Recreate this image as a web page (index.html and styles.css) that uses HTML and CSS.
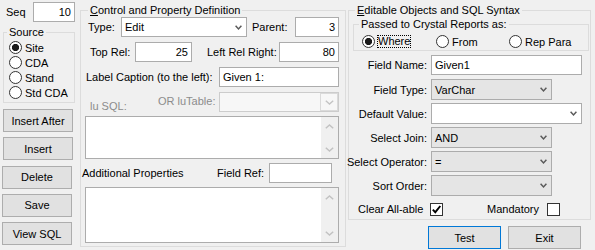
FILE: index.html
```html
<!DOCTYPE html>
<html>
<head>
<meta charset="utf-8">
<link rel="stylesheet" href="styles.css">
</head>
<body>
<div class="dialog">
  <div class="left">
    <div class="seq-row"><span class="seq-label">Seq</span><div class="tb num seq-input">10</div></div>
    <fieldset class="grp source">
      <legend>Source</legend>
      <div class="src-list">
        <div class="src-row"><span class="radio on"></span><span class="rtxt">Site</span></div>
        <div class="src-row"><span class="radio"></span><span class="rtxt">CDA</span></div>
        <div class="src-row"><span class="radio"></span><span class="rtxt">Stand</span></div>
        <div class="src-row"><span class="radio"></span><span class="rtxt">Std CDA</span></div>
      </div>
    </fieldset>
    <div class="btn-stack">
      <div class="btn">Insert After</div>
      <div class="btn">Insert</div>
      <div class="btn shift">Delete</div>
      <div class="btn shift">Save</div>
      <div class="btn shift">View SQL</div>
    </div>
  </div>

  <fieldset class="grp mid">
    <legend><span class="u">C</span>ontrol and Property Definition</legend>
    <div class="mrow r1">
      <span class="lbl l-type">Type:</span>
      <div class="combo white w126"><span class="ctxt">Edit</span><svg class="dd" width="7" height="5" viewBox="0 0 7 5"><path d="M0.6 0.8 L3.5 3.9 L6.4 0.8" fill="none" stroke="#5a5a5a" stroke-width="1.5"/></svg></div>
      <span class="lbl l-parent">Parent:</span>
      <div class="tb num w44">3</div>
    </div>
    <div class="mrow">
      <span class="lbl l-toprel">Top Rel:</span>
      <div class="tb num w57">25</div>
      <span class="lbl l-lrr">Left Rel Right:</span>
      <div class="tb num w60">80</div>
    </div>
    <div class="mrow">
      <span class="lbl l-cap">Label Caption (to the left):</span>
      <div class="tb w120">Given 1:</div>
    </div>
    <div class="mrow">
      <span class="lbl dis l-lusql">lu SQL:</span>
      <span class="lbl dis l-lut">OR luTable:</span>
      <div class="combo disabled w120"><span class="ctxt"></span><span class="ddbox"><svg width="9" height="5" viewBox="0 0 9 5"><path d="M0.8 0.8 L4.5 4 L8.2 0.8" fill="none" stroke="#c4c4c4" stroke-width="1.4"/></svg></span></div>
    </div>
    <div class="memo m1">
      <div class="area"></div>
      <div class="vs">
        <svg width="9" height="5" viewBox="0 0 9 5"><path d="M0.8 4.2 L4.5 1 L8.2 4.2" fill="none" stroke="#c2c2c2" stroke-width="1.5"/></svg>
        <svg width="9" height="5" viewBox="0 0 9 5"><path d="M0.8 0.8 L4.5 4 L8.2 0.8" fill="none" stroke="#c2c2c2" stroke-width="1.5"/></svg>
      </div>
    </div>
    <div class="mrow r6">
      <span class="lbl l-add">Additional Properties</span>
      <span class="lbl l-fref">Field Ref:</span>
      <div class="tb w63"></div>
    </div>
    <div class="memo m2">
      <div class="area"></div>
      <div class="vs">
        <svg width="9" height="5" viewBox="0 0 9 5"><path d="M0.8 4.2 L4.5 1 L8.2 4.2" fill="none" stroke="#c2c2c2" stroke-width="1.5"/></svg>
        <svg width="9" height="5" viewBox="0 0 9 5"><path d="M0.8 0.8 L4.5 4 L8.2 0.8" fill="none" stroke="#c2c2c2" stroke-width="1.5"/></svg>
      </div>
    </div>
  </fieldset>

  <div class="right">
    <fieldset class="grp rgroup">
      <legend><span class="u">E</span>ditable Objects and SQL Syntax</legend>
      <fieldset class="grp inner">
        <legend>Passed to Crystal Reports as:</legend>
        <div class="rrow">
          <div class="ritem w74"><span class="radio on"></span><span class="focus">Where</span></div>
          <div class="ritem w73"><span class="radio"></span><span class="rt2">From</span></div>
          <div class="ritem"><span class="radio"></span><span class="rt2">Rep Para</span></div>
        </div>
      </fieldset>
      <div class="frow f1"><span class="flabel">Field Name:</span><div class="tb w151">Given1</div></div>
      <div class="frow f2"><span class="flabel">Field Type:</span><div class="combo list w121 h21"><span class="ctxt">VarChar</span><svg class="dd" width="7" height="5" viewBox="0 0 7 5"><path d="M0.6 0.8 L3.5 3.9 L6.4 0.8" fill="none" stroke="#5a5a5a" stroke-width="1.5"/></svg></div></div>
      <div class="frow"><span class="flabel">Default Value:</span><div class="combo white w151 h21"><span class="ctxt"></span><svg class="dd" width="7" height="5" viewBox="0 0 7 5"><path d="M0.6 0.8 L3.5 3.9 L6.4 0.8" fill="none" stroke="#5a5a5a" stroke-width="1.5"/></svg></div></div>
      <div class="frow"><span class="flabel">Select Join:</span><div class="combo list w121 h21"><span class="ctxt">AND</span><svg class="dd" width="7" height="5" viewBox="0 0 7 5"><path d="M0.6 0.8 L3.5 3.9 L6.4 0.8" fill="none" stroke="#5a5a5a" stroke-width="1.5"/></svg></div></div>
      <div class="frow"><span class="flabel">Select Operator:</span><div class="combo list w121 h21"><span class="ctxt">=</span><svg class="dd" width="7" height="5" viewBox="0 0 7 5"><path d="M0.6 0.8 L3.5 3.9 L6.4 0.8" fill="none" stroke="#5a5a5a" stroke-width="1.5"/></svg></div></div>
      <div class="frow"><span class="flabel">Sort Order:</span><div class="combo list w121 h21"><span class="ctxt"></span><svg class="dd" width="7" height="5" viewBox="0 0 7 5"><path d="M0.6 0.8 L3.5 3.9 L6.4 0.8" fill="none" stroke="#5a5a5a" stroke-width="1.5"/></svg></div></div>
      <div class="crow">
        <span class="c1">Clear All-able</span>
        <span class="chk"><svg width="11" height="11" viewBox="0 0 11 11"><path d="M1.8 5.6 L4.3 8.2 L9.3 2" fill="none" stroke="#000" stroke-width="1.9"/></svg></span>
        <span class="c2">Mandatory</span>
        <span class="chk"></span>
      </div>
    </fieldset>
    <div class="brow">
      <div class="btn w73 default">Test</div>
      <div class="btn w73">Exit</div>
    </div>
  </div>
</div>
</body>
</html>
```

FILE: styles.css
```css
* { box-sizing: border-box; }
html, body { margin: 0; padding: 0; }
body {
  width: 595px;
  height: 250px;
  background: #f0f0f0;
  font-family: "Liberation Sans", Arial, sans-serif;
  font-size: 11px;
  color: #000;
  overflow: hidden;
}
.dialog { display: flex; align-items: flex-start; padding-left: 2px; }

/* generic controls */
.tb {
  height: 20px;
  background: #fff;
  border: 1px solid #acacac;
  line-height: 18px;
  padding: 0 3px;
  white-space: nowrap;
  overflow: hidden;
  flex: none;
}
.tb.num { text-align: right; }
.combo {
  height: 20px;
  border: 1px solid #acacac;
  display: flex;
  align-items: center;
  padding-left: 3px;
  flex: none;
}
.combo.h21 { height: 21px; }
.combo .ctxt { flex: 1; white-space: nowrap; }
.combo .dd { margin-right: 4px; flex: none; }
.combo.white { background: #fff; }
.combo.list { background: #e5e5e5; }
.combo.disabled { background: #f7f7f7; border-color: #cccccc; padding: 0; }
.ddbox {
  width: 18px;
  height: 18px;
  border: 1px solid #dadada;
  display: flex;
  align-items: center;
  justify-content: center;
}
.btn {
  height: 23px;
  border: 1px solid #adadad;
  background: #e1e1e1;
  display: flex;
  align-items: center;
  justify-content: center;
  flex: none;
}
.btn.default { border-color: #0078d7; }
.radio {
  width: 13px;
  height: 13px;
  border: 1px solid #333;
  border-radius: 50%;
  background: #fff;
  flex: none;
}
.radio.on { background: radial-gradient(circle, #1a1a1a 0, #1a1a1a 3.3px, #fff 3.9px); }
.chk {
  width: 13px;
  height: 13px;
  border: 1px solid #333;
  background: #fff;
  display: flex;
  align-items: center;
  justify-content: center;
  flex: none;
}
.u { text-decoration: underline; }
.lbl { white-space: nowrap; flex: none; }
.dis { color: #8c8c8c; }

.w44 { width: 44px; } .w57 { width: 57px; } .w60 { width: 60px; }
.w63 { width: 63px; } .w73 { width: 73px; } .w74 { width: 74px; }
.w120 { width: 120px; } .w121 { width: 121px; } .w126 { width: 126px; } .w151 { width: 151px; }

fieldset.grp {
  margin: 0;
  padding: 0;
  border: 1px solid #dcdcdc;
  min-width: 0;
}
fieldset.grp > legend { padding: 0 2px; line-height: 14px; height: 14px; }

/* left column */
.left { width: 73px; margin-top: 2px; display: flex; flex-direction: column; flex: none; }
.seq-row { display: flex; align-items: center; height: 20px; }
.seq-label { padding-left: 4px; }
.seq-input { margin-left: auto; width: 42px; }
.source { margin: 3px 0 0 1px !important; width: 72px; padding: 1px 0 2px 0 !important; }
.source > legend { margin-left: 3px; }
.src-list { padding-left: 5px; }
.src-row { display: flex; align-items: center; height: 15px; }
.rtxt { margin-left: 3px; }
.btn-stack { display: flex; flex-direction: column; gap: 5.3px; margin-top: 6px; }
.btn-stack .btn { width: 70px; margin-left: 1px; }
.btn-stack .btn.shift { margin-left: 0; }

/* middle group */
.mid { margin: 3px 0 0 5px !important; width: 266px; flex: none; padding: 0 0 3px 0 !important; }
.mid > legend { margin-left: 7px; }
.mrow { display: flex; align-items: center; height: 20px; margin-top: 5px; }
.mrow.r1 { margin-top: 0; }
.l-type { margin-left: 7px; width: 33px; }
.l-parent { margin-left: 5px; width: 43px; }
.l-toprel { margin-left: 9px; width: 45px; }
.l-lrr { margin-left: 15px; width: 72px; }
.l-cap { margin-left: 5px; width: 133px; }
.l-lusql { margin-left: 9px; width: 68px; align-self: flex-end; }
.l-lut { width: 61px; padding-bottom: 3px; }
.memo {
  display: flex;
  background: #fff;
  border: 1px solid #acacac;
  margin-left: 4px;
  width: 254px;
}
.memo .area { flex: 1; }
.memo .vs {
  width: 17px;
  background: #f0f0f0;
  display: flex;
  flex-direction: column;
  justify-content: space-between;
  align-items: center;
  padding: 7px 0 6px;
}
.m1 { margin-top: 4px; height: 43px; }
.m2 { margin-top: 4px; height: 56px; }
.mrow.r6 { margin-top: 4px; }
.l-add { margin-left: 1px; width: 135px; }
.l-fref { width: 52px; }

/* right column */
.right { margin-left: 2px; width: 243px; display: flex; flex-direction: column; flex: none; }
.rgroup { margin-top: 3px !important; width: 243px; padding: 0 0 2px 0 !important; }
.rgroup > legend { margin-left: 6px; }
.inner { margin: 0 1px 0 4px !important; padding: 3px 0 1px 0 !important; }
.inner > legend { line-height: 12px; height: 12px; margin-left: 5px; }
.rrow { display: flex; align-items: center; height: 15px; padding-left: 8px; }
.ritem { display: flex; align-items: center; flex: none; }
.focus { margin-left: 2px; border: 1px dotted #000; line-height: 11px; }
.rt2 { margin-left: 3px; }
.frow { display: flex; align-items: center; margin-top: 3px; }
.frow.f1, .frow.f2 { margin-top: 4px; }
.flabel {
  width: 78px;
  margin-right: 4px;
  display: flex;
  justify-content: flex-end;
  white-space: nowrap;
  flex: none;
}
.crow { display: flex; align-items: center; height: 16px; margin-top: 5px; padding-left: 9px; }
.c1 { width: 72px; white-space: nowrap; }
.c2 { margin-left: 44px; width: 60px; white-space: nowrap; }
.brow { display: flex; gap: 7px; margin-top: 6px; padding-left: 80px; }
```
